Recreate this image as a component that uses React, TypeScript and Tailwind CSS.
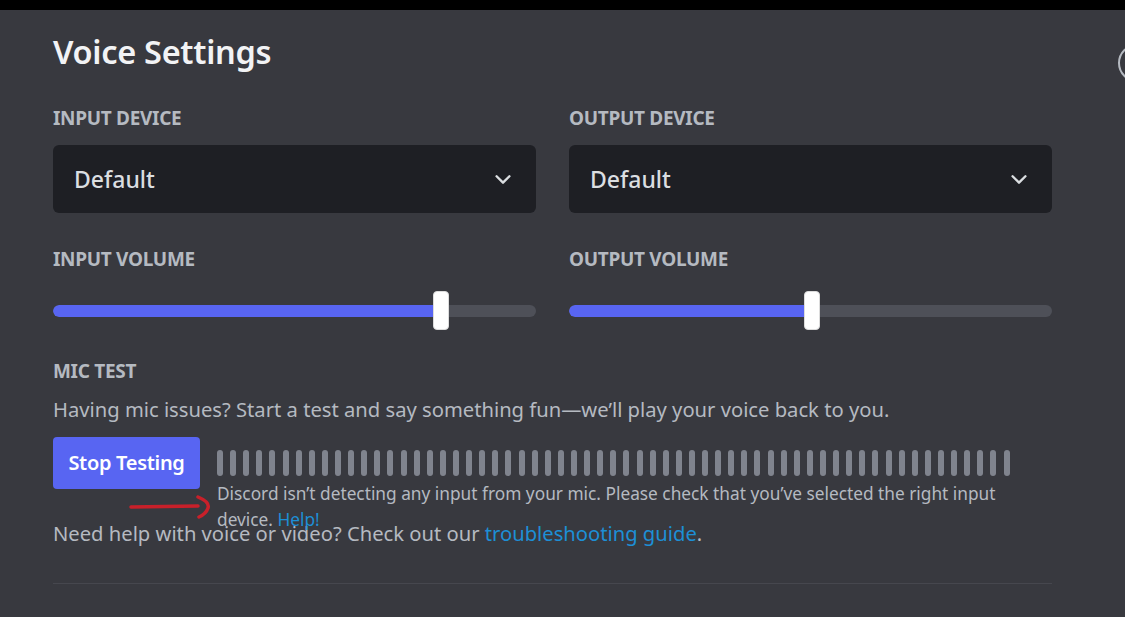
import React from "react";

const font = { fontFamily: '"Noto Sans", "Open Sans", sans-serif' };

function Chevron() {
  return (
    <svg width="22" height="22" viewBox="0 0 24 24" fill="none">
      <path d="M5 9l7 7 7-7" stroke="#dbdee1" strokeWidth="2.6" strokeLinecap="round" strokeLinejoin="round" />
    </svg>
  );
}

function Select() {
  return (
    <div className="h-[68px] rounded-[6px] bg-[#1e1f24] flex items-center justify-between pl-[21px] pr-[22px]">
      <span className="text-[23px] text-[#dbdee1] font-medium">Default</span>
      <Chevron />
    </div>
  );
}

function Slider({ pct }: { pct: number }) {
  return (
    <div className="relative h-[40px] flex items-center">
      <div className="w-full h-[12px] rounded-full bg-[#4e5058] overflow-hidden">
        <div className="h-full bg-[#5865f2] rounded-full" style={{ width: `${pct}%` }} />
      </div>
      <div
        className="absolute top-0 w-[16px] h-[39px] bg-white rounded-[4px] border border-[#dcdcdc]"
        style={{ left: `calc(${pct}% - 8px)` }}
      />
    </div>
  );
}

function Label({ children }: { children: React.ReactNode }) {
  return <div className="text-[19px] font-bold uppercase text-[#b5bac1] tracking-[-0.3px] leading-[22px]">{children}</div>;
}

export default function App() {
  const bars = Array.from({ length: 61 });
  return (
    <div className="w-[1125px] h-[617px] bg-[#38393f] relative overflow-hidden" style={font}>
      <div className="h-[10px] bg-black" />
      <div className="absolute left-[1118px] top-[44px] w-[38px] h-[38px] rounded-full border-2 border-[#b5bac1]" />
      <div className="pl-[53px] w-[1052px]">
        <h1 className="mt-[22px] text-[32.5px] font-semibold text-[#f2f3f5] leading-[40px] tracking-[-0.3px]">Voice Settings</h1>
        <div className="mt-[35px] grid grid-cols-2 gap-x-[33px]">
          <div>
            <Label>INPUT DEVICE</Label>
            <div className="mt-[16px]"><Select /></div>
            <div className="mt-[35px]"><Label>INPUT VOLUME</Label></div>
            <div className="mt-[21px]"><Slider pct={80.3} /></div>
          </div>
          <div>
            <Label>OUTPUT DEVICE</Label>
            <div className="mt-[16px]"><Select /></div>
            <div className="mt-[35px]"><Label>OUTPUT VOLUME</Label></div>
            <div className="mt-[21px]"><Slider pct={50.3} /></div>
          </div>
        </div>
        <div className="mt-[29px]"><Label>MIC TEST</Label></div>
        <p className="mt-[14px] text-[20.2px] text-[#b5bac1] leading-[26px]">
          Having mic issues? Start a test and say something fun—we’ll play your voice back to you.
        </p>
        <div className="mt-[15px] flex items-start gap-[17px]">
          <button className="h-[52px] w-[147px] shrink-0 rounded-[4px] bg-[#5865f2] text-white text-[20px] font-semibold tracking-[-0.3px]">
            Stop Testing
          </button>
          <div className="flex-1 relative">
            <div className="mt-[13px] w-[793px] flex justify-between h-[26px]">
              {bars.map((_, i) => (
                <div key={i} className="w-[6px] h-[26px] rounded-full bg-[#80848e]" />
              ))}
            </div>
            <div className="absolute top-[44px] left-0 w-[805px] text-[17.3px] leading-[26px] text-[#b5bac1]">
              Discord isn’t detecting any input from your mic. Please check that you’ve selected the right input device.{" "}
              <span className="text-[#1d8fd6]">Help!</span>
            </div>
          </div>
        </div>
        <p className="mt-[31px] text-[20.2px] text-[#b5bac1] leading-[26px]">
          Need help with voice or video? Check out our <span className="text-[#1d8fd6]">troubleshooting guide</span>.
        </p>
        <div className="mt-[37px] h-px bg-[#46474e]" />
      </div>
      <svg className="absolute left-[128px] top-[494px]" width="90" height="26" viewBox="0 0 90 26" fill="none">
        <path d="M3 13 L70 12" stroke="#c8202a" strokeWidth="3.5" strokeLinecap="round" />
        <path d="M70 3 Q82 8 80 14 Q78 20 71 23" stroke="#c8202a" strokeWidth="3.5" strokeLinecap="round" fill="none" />
      </svg>
    </div>
  );
}
